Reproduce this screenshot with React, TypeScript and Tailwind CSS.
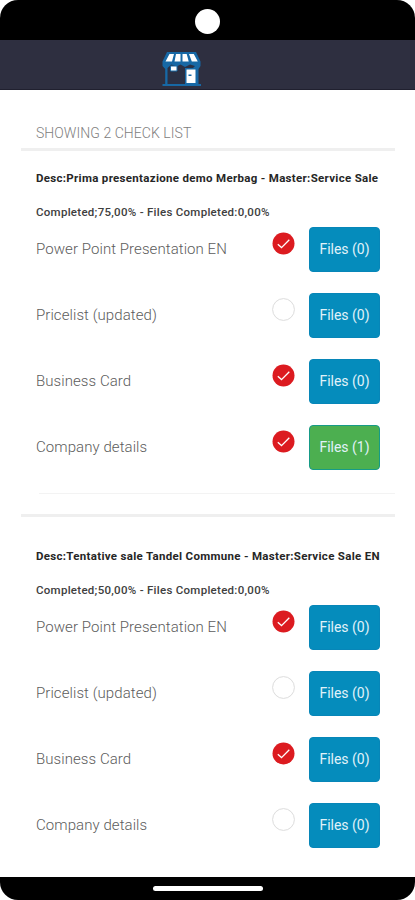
type Item = { label: string; done: boolean; files: number };

type CheckList = { desc: string; completed: string; items: Item[] };

const CHECK_LISTS: CheckList[] = [
  {
    desc: 'Desc:Prima presentazione demo Merbag - Master:Service Sale',
    completed: 'Completed;75,00% - Files Completed:0,00%',
    items: [
      { label: 'Power Point Presentation EN', done: true, files: 0 },
      { label: 'Pricelist (updated)', done: false, files: 0 },
      { label: 'Business Card', done: true, files: 0 },
      { label: 'Company details', done: true, files: 1 },
    ],
  },
  {
    desc: 'Desc:Tentative sale Tandel Commune - Master:Service Sale EN',
    completed: 'Completed;50,00% - Files Completed:0,00%',
    items: [
      { label: 'Power Point Presentation EN', done: true, files: 0 },
      { label: 'Pricelist (updated)', done: false, files: 0 },
      { label: 'Business Card', done: true, files: 0 },
      { label: 'Company details', done: false, files: 0 },
    ],
  },
];

export default function App() {
  return (
    <div className="flex h-[900px] w-[415px] flex-col overflow-hidden bg-white font-['Roboto',sans-serif]">
      {/* Status area with camera hole */}
      <div className="flex h-10 shrink-0 justify-center rounded-t-[18px] bg-black pt-[9px]">
        <div className="h-[25px] w-[25px] rounded-full bg-white" />
      </div>

      <header className="flex h-[50px] shrink-0 border-b border-[#20202f] bg-[#2e2f40] pt-[11px] pl-[162px]">
        <ShopLogo />
      </header>

      <main className="min-h-0 flex-1 overflow-hidden">
        <h1 className="h-[58px] pt-[33px] pl-9 text-[14px] leading-5 font-light tracking-[0.06px] text-[#808080]">
          SHOWING 2 CHECK LIST
        </h1>
        <Divider />
        <div className="h-[10px]" />
        <Section list={CHECK_LISTS[0]} />
        <div className="mt-[23px] mr-5 mb-[20px] ml-[39px] h-px bg-[#f3f3f3]" />
        <Divider />
        <div className="h-[22px]" />
        <Section list={CHECK_LISTS[1]} />
      </main>

      {/* Home indicator */}
      <div className="flex h-[23px] shrink-0 justify-center rounded-b-[18px] bg-black pt-[9px]">
        <div className="h-[5px] w-[110px] rounded-full bg-white" />
      </div>
    </div>
  );
}

function Divider() {
  return <div className="mr-5 ml-[21px] h-[3px] bg-[#efefef]" />;
}

function Section({ list }: { list: CheckList }) {
  return (
    <section className="pr-[35px] pl-9">
      <p className="h-[34px] text-[11.5px] leading-[35px] font-bold tracking-[0.31px] whitespace-nowrap text-[#262626]">
        {list.desc}
      </p>
      <p className="h-[31px] text-[11.5px] leading-[35px] font-medium tracking-[0.28px] whitespace-nowrap text-[#404040]">
        {list.completed}
      </p>
      <div className="flex flex-col gap-5">
        {list.items.map(item => (
          <div key={item.label} className="flex h-[46px] items-center">
            <span className="flex-1 text-[15px] font-light tracking-[0.07px] whitespace-nowrap text-[#5c5c5c]">
              {item.label}
            </span>
            <Check done={item.done} />
            <button
              className={`ml-[14px] h-[45px] w-[71px] rounded-[4px] border text-[14px] text-[#e0f2f9] ${
                item.files > 0 ? 'border-[#169b87] bg-[#4caf50]' : 'border-[#0786b8] bg-[#058cbc]'
              }`}
            >
              Files ({item.files})
            </button>
          </div>
        ))}
      </div>
    </section>
  );
}

function Check({ done }: { done: boolean }) {
  return (
    <svg className="mb-3 h-[23px] w-[23px]" viewBox="0 0 23 23" fill="none">
      {done ? (
        <>
          <circle cx="11.5" cy="11.5" r="11" fill="#dc1b20" />
          <path d="M5.8 12.2 9.5 15.6 17.3 7.8" stroke="#fff" strokeWidth="1.3" />
        </>
      ) : (
        <circle cx="11.5" cy="11.5" r="10.9" fill="#fff" stroke="#dcdcdc" />
      )}
    </svg>
  );
}

function ShopLogo() {
  return (
    <svg className="h-[36px] w-[40px]" viewBox="0 0 40 36">
      <path d="M5 1h29l4.5 9.5v4.5L36.5 18v15H39v2H.5v-2h2.700V18L.5 15v-4.500z" fill="#1768a5" />
      <path d="M5.500 17l4-3.500 5 2 4-2 4.500 2.500 5-2.500 5 1.500-2 2H23v16H5.500z" fill="#2b3044" />
      <path d="M7.500 3H12l-2 7.500H3.500zM14 3h4.500v7.500h-6zM20.500 3h4.200l2 7.500h-6.200zM27 3h4.800l4 7.500h-6z" fill="#fff" />
      <path d="M8.500 15h6.500v5H8.500z" fill="#fff" stroke="#1768a5" />
      <path d="M24.500 18.500h9V32h-9z" fill="#fff" />
      <path d="M26.500 23.500h3V25h-3z" fill="#1768a5" />
    </svg>
  );
}
